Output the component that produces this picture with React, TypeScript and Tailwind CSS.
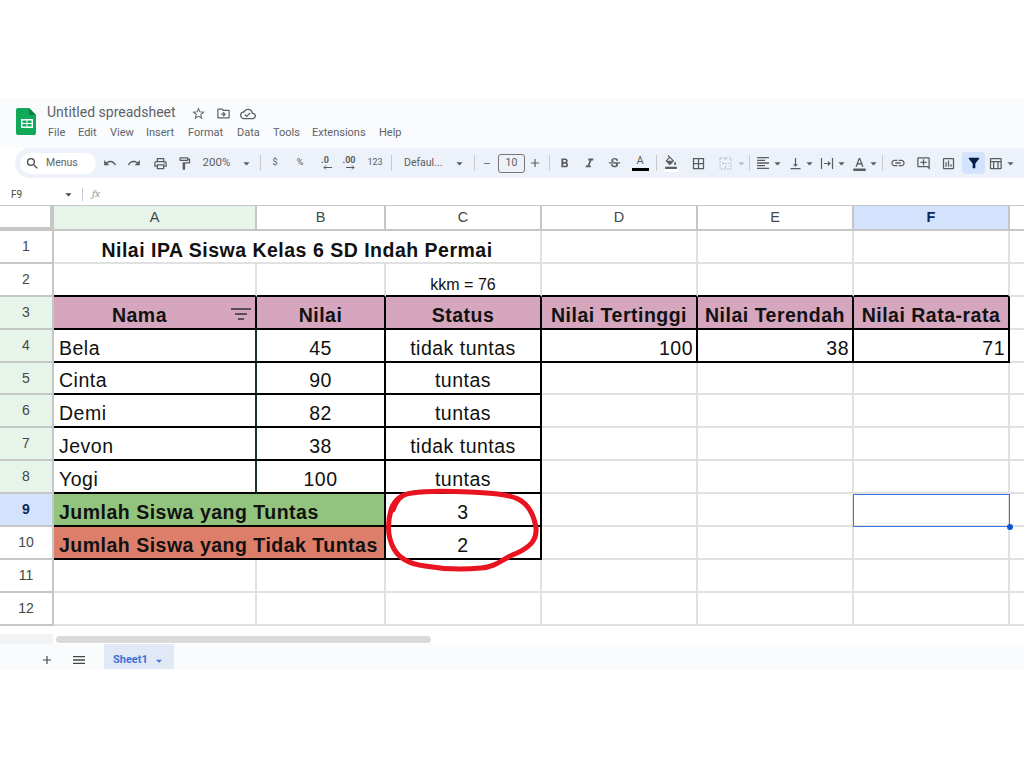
import type { ReactNode } from 'react';
import {
  MdAdd, MdArrowDropDown, MdBorderAll, MdFilterAlt, MdFormatAlignLeft, MdFormatBold, MdFormatColorFill,
  MdFormatColorText, MdFormatItalic, MdLink, MdMenu, MdOutlineAddComment, MdOutlineCloudDone,
  MdOutlineDriveFileMove, MdOutlineFormatPaint, MdOutlineInsertChart, MdOutlinePrint, MdOutlineStarBorder,
  MdOutlineTableChart, MdRedo, MdRemove, MdSearch, MdStrikethroughS, MdUndo, MdVerticalAlignBottom,
} from 'react-icons/md';

const menus = [
  ['File', 'w-[30px]'],
  ['Edit', 'w-[32px]'],
  ['View', 'w-[36px]'],
  ['Insert', 'w-[42px]'],
  ['Format', 'w-[49px]'],
  ['Data', 'w-[36px]'],
  ['Tools', 'w-[39px]'],
  ['Extensions', 'w-[67px]'],
  ['Help', 'w-[30px]'],
];

function T({ c, children }: { c: string; children?: ReactNode }) {
  return <div className={`flex h-full shrink-0 items-center justify-center ${c}`}>{children}</div>;
}

function Sep({ c }: { c: string }) {
  return (
    <T c={c}>
      <div className="h-[16px] w-px bg-[#c7c9cc]" />
    </T>
  );
}

function Caret({ c }: { c: string }) {
  return (
    <T c={c}>
      <MdArrowDropDown size={15} className="shrink-0" />
    </T>
  );
}

function Header() {
  return (
    <div className="flex h-[50px] bg-[#f9fbfd] pl-[16px] pt-[10px]">
      <svg width="20" height="27" viewBox="0 0 20 27" className="shrink-0">
        <path d="M2 0h11l7 7v18a2 2 0 0 1-2 2H2a2 2 0 0 1-2-2V2a2 2 0 0 1 2-2z" fill="#0fa958" />
        <path d="M13 0l7 7h-7z" fill="#0b8043" />
        <path d="M5 11h12v9H5z" fill="#fff" />
        <path d="M6.500 12.500h4v2.500h-4zM11.500 12.500h4v2.500h-4zM6.500 16h4v2.500h-4zM11.500 16h4v2.500h-4z" fill="#0fa958" />
      </svg>
      <div className="ml-[11px] -mt-[3px] flex flex-col">
        <div className="flex h-[14px] items-center text-[#5f6368]">
          <span className="w-[144px] text-[14px] leading-none">Untitled spreadsheet</span>
          <MdOutlineStarBorder size={15} className="mt-[3px]" />
          <MdOutlineDriveFileMove size={15} className="ml-[10px] mt-[3px]" />
          <MdOutlineCloudDone size={16} className="ml-[9px] mt-[3px]" />
        </div>
        <div className="mt-[6px] flex h-[16px] items-center pl-[1px] text-[11px] text-[#5f6368]">
          {menus.map(([label, w]) => (
            <span key={label} className={w}>
              {label}
            </span>
          ))}
        </div>
      </div>
    </div>
  );
}

function Toolbar() {
  return (
    <div className="ml-[15px] flex h-[30px] items-center rounded-l-[15px] bg-[#edf2fa] pl-[5px] text-[#5a5e61]">
      <div className="flex h-[21px] w-[76px] shrink-0 items-center rounded-full bg-white pl-[5px] text-[10.500px] text-[#5f6368]">
        <MdSearch size={15} className="text-[#444746]" />
        <span className="ml-[6px]">Menus</span>
      </div>
      <T c="w-[27px]"><MdUndo size={14} /></T>
      <T c="w-[22px]"><MdRedo size={14} /></T>
      <T c="w-[30px]"><MdOutlinePrint size={15} /></T>
      <T c="w-[18px]"><MdOutlineFormatPaint size={15} /></T>
      <T c="w-[47px] text-[11.500px]">200%</T>
      <Caret c="w-[13px]" />
      <Sep c="w-[14px]" />
      <T c="w-[16px] text-[9px]">$</T>
      <T c="w-[34px] text-[9px]">%</T>
      <T c="w-[16px] flex-col text-[9px] font-bold leading-[9px]">
        <span>.0</span>
        <svg width="10" height="5" viewBox="0 0 10 5" fill="none" stroke="currentColor" className="ml-[4px]">
          <path d="M10 2.500H2M4 .5l-2 2 2 2" />
        </svg>
      </T>
      <T c="w-[32px] flex-col text-[9px] font-bold leading-[9px]">
        <span>.00</span>
        <svg width="10" height="5" viewBox="0 0 10 5" fill="none" stroke="currentColor" className="ml-[4px]">
          <path d="M0 2.500h8M6 .5l2 2-2 2" />
        </svg>
      </T>
      <T c="w-[20px] text-[9px]">123</T>
      <Sep c="w-[12px]" />
      <T c="w-[55px] justify-start pl-[7px] text-[10.500px]">Defaul...</T>
      <Caret c="w-[14px]" />
      <Sep c="w-[16px]" />
      <T c="w-[10px]"><MdRemove size={13} /></T>
      <T c="w-[27px] ml-[6px]">
        <div className="flex h-[19px] w-[27px] items-center justify-center rounded-[3px] border border-[#747775] text-[10.500px]">10</div>
      </T>
      <T c="w-[20px]"><MdAdd size={14} /></T>
      <Sep c="w-[8px]" />
      <T c="w-[22px]"><MdFormatBold size={15} /></T>
      <T c="w-[28px]"><MdFormatItalic size={15} /></T>
      <T c="w-[22px]"><MdStrikethroughS size={15} /></T>
      <T c="w-[30px] flex-col">
        <span className="text-[11px] leading-[11px]">A</span>
        <div className="mt-[2px] h-[3px] w-[17px] bg-black" />
      </T>
      <Sep c="w-[2px]" />
      <T c="w-[28px] flex-col">
        <MdFormatColorFill size={14} />
        <div className="h-[3px] w-[14px] bg-white" />
      </T>
      <T c="w-[26px]"><MdBorderAll size={15} /></T>
      <T c="w-[28px]">
        <svg width="13" height="13" viewBox="0 0 13 13" fill="none" stroke="#b9bdc2">
          <path d="M1 1h11v11H1zM6.500 1v3M6.500 9v3M3 6.500h7" strokeDasharray="2 1" />
        </svg>
      </T>
      <T c="w-[4px] text-[#b9bdc2]"><MdArrowDropDown size={15} className="shrink-0" /></T>
      <Sep c="w-[12px]" />
      <T c="w-[16px]"><MdFormatAlignLeft size={16} /></T>
      <Caret c="w-[12px]" />
      <T c="w-[24px]"><MdVerticalAlignBottom size={15} /></T>
      <Caret c="w-[4px]" />
      <T c="w-[24px] ml-[4px]">
        <svg width="14" height="13" viewBox="0 0 14 13" fill="none" stroke="currentColor" strokeWidth="1.200">
          <path d="M1.500 1v11M12.500 1v11M4 6.500h6M8 4.500l2 2-2 2" />
        </svg>
      </T>
      <Caret c="w-[4px]" />
      <T c="w-[24px] ml-[4px]"><MdFormatColorText size={15} /></T>
      <Caret c="w-[4px]" />
      <Sep c="w-[14px]" />
      <T c="w-[18px]"><MdLink size={16} /></T>
      <T c="w-[32px]"><MdOutlineAddComment size={15} /></T>
      <T c="w-[18px]"><MdOutlineInsertChart size={15} /></T>
      <T c="w-[23px] ml-[5px]">
        <div className="flex h-[22px] w-[23px] items-center justify-center rounded-[4px] bg-[#d3e3fd] text-[#041e49]">
          <MdFilterAlt size={16} />
        </div>
      </T>
      <T c="w-[20px]"><MdOutlineTableChart size={15} /></T>
      <Caret c="w-[10px]" />
    </div>
  );
}

function FormulaBar() {
  return (
    <div className="mt-[5px] flex h-[23px] items-center border-b border-[#c7c7c7] pl-[11px] text-[10px] text-[#444746]">
      <span className="w-[50px]">F9</span>
      <MdArrowDropDown size={15} />
      <div className="ml-[6px] h-[13px] w-px bg-[#c7c9cc]" />
      <span className="ml-[9px] font-serif text-[11px] italic text-[#9aa0a6]">fx</span>
    </div>
  );
}

const gray = 'border-[#e1e1e1]';
const big = 'text-[19.500px] tracking-[0.5px] leading-[24px] pb-[1px]';
const body = 'flex items-end overflow-hidden border-r-2 border-b-2 whitespace-nowrap text-[#111]';
const pink = 'justify-center bg-[#d5a6bd] border-black font-bold';
const nameCell = 'pl-[5px] border-b-black border-r-[#17352a]';
const boxed = 'justify-center border-black';
const topLine = 'border-b-black border-r-[#e1e1e1]';

type CellDef = { text?: string; c: string; size?: string };

// rows 1-12, each without the row number cell
const rows: { n: number; head: string; cells: CellDef[] }[] = [
  {
    n: 1,
    head: 'bg-white text-[#444746]',
    cells: [
      { text: 'Nilai IPA Siswa Kelas 6 SD Indah Permai', c: `col-span-3 justify-center font-bold ${gray}`, size: 'text-[19.500px] tracking-[0.5px] leading-[24px] pb-0' },
      { c: gray },
      { c: gray },
      { c: gray },
    ],
  },
  {
    n: 2,
    head: 'bg-white text-[#444746]',
    cells: [
      { c: topLine },
      { c: topLine },
      { text: 'kkm = 76', c: `justify-center ${topLine}`, size: 'text-[16px] leading-[20px]' },
      { c: topLine },
      { c: topLine },
      { c: topLine },
    ],
  },
  {
    n: 3,
    head: 'bg-[#e6f4ea] text-[#444746]',
    cells: [
      { text: 'Nama', c: `relative pr-[30px] ${pink}` },
      { text: 'Nilai', c: pink },
      { text: 'Status', c: pink },
      { text: 'Nilai Tertinggi', c: pink },
      { text: 'Nilai Terendah', c: pink },
      { text: 'Nilai Rata-rata', c: pink },
    ],
  },
  {
    n: 4,
    head: 'bg-[#e6f4ea] text-[#444746]',
    cells: [
      { text: 'Bela', c: nameCell },
      { text: '45', c: boxed },
      { text: 'tidak tuntas', c: boxed },
      { text: '100', c: 'justify-end pr-[3px] border-black' },
      { text: '38', c: 'justify-end pr-[3px] border-black' },
      { text: '71', c: 'justify-end pr-[3px] border-black' },
    ],
  },
  {
    n: 5,
    head: 'bg-[#e6f4ea] text-[#444746]',
    cells: [
      { text: 'Cinta', c: nameCell },
      { text: '90', c: boxed },
      { text: 'tuntas', c: boxed },
      { c: gray },
      { c: gray },
      { c: gray },
    ],
  },
  {
    n: 6,
    head: 'bg-[#e6f4ea] text-[#444746]',
    cells: [
      { text: 'Demi', c: nameCell },
      { text: '82', c: boxed },
      { text: 'tuntas', c: boxed },
      { c: gray },
      { c: gray },
      { c: gray },
    ],
  },
  {
    n: 7,
    head: 'bg-[#e6f4ea] text-[#444746]',
    cells: [
      { text: 'Jevon', c: nameCell },
      { text: '38', c: boxed },
      { text: 'tidak tuntas', c: boxed },
      { c: gray },
      { c: gray },
      { c: gray },
    ],
  },
  {
    n: 8,
    head: 'bg-[#e6f4ea] text-[#444746]',
    cells: [
      { text: 'Yogi', c: nameCell },
      { text: '100', c: boxed },
      { text: 'tuntas', c: boxed },
      { c: gray },
      { c: gray },
      { c: gray },
    ],
  },
  {
    n: 9,
    head: 'bg-[#d3e3fd] font-bold text-[#0b2a5b]',
    cells: [
      { text: 'Jumlah Siswa yang Tuntas', c: 'col-span-2 pl-[5px] bg-[#93c47d] border-black font-bold' },
      { text: '3', c: boxed },
      { c: gray },
      { c: gray },
      { c: `relative overflow-visible ${gray}` },
    ],
  },
  {
    n: 10,
    head: 'bg-white text-[#444746]',
    cells: [
      { text: 'Jumlah Siswa yang Tidak Tuntas', c: 'col-span-2 pl-[5px] bg-[#dd7e6b] border-black font-bold' },
      { text: '2', c: boxed },
      { c: gray },
      { c: gray },
      { c: gray },
    ],
  },
  { n: 11, head: 'bg-white text-[#444746]', cells: [{ c: gray }, { c: gray }, { c: gray }, { c: gray }, { c: gray }, { c: gray }] },
  { n: 12, head: 'bg-white text-[#444746]', cells: [{ c: gray }, { c: gray }, { c: gray }, { c: gray }, { c: gray }, { c: gray }] },
];

const colHeads = [
  { label: 'A', c: 'bg-[#e6f4ea] text-[#444746]' },
  { label: 'B', c: 'bg-white text-[#444746]' },
  { label: 'C', c: 'bg-white text-[#444746]' },
  { label: 'D', c: 'bg-white text-[#444746]' },
  { label: 'E', c: 'bg-white text-[#444746]' },
  { label: 'F', c: 'bg-[#d3e3fd] font-bold text-[#0b2a5b]' },
];

function Sheet() {
  return (
    <div className="grid h-[428px] grid-cols-[54px_203px_129px_156px_156px_156px_156px_14px] grid-rows-[25px] auto-rows-[32.900px] overflow-hidden">
      <div className="border-r-[4px] border-b-[4px] border-[#c4c7c5] bg-white" />
      {colHeads.map((h) => (
        <div key={h.label} className={`flex items-center justify-center border-r-2 border-b-2 border-[#c4c7c5] text-[14.500px] ${h.c}`}>
          {h.label}
        </div>
      ))}
      <div className="border-b-2 border-[#c4c7c5]" />
      {rows.map((r) => (
        <div key={r.n} className="contents">
          <div className={`flex items-center justify-center border-r-2 border-b-2 border-[#c4c7c5] text-[14px] ${r.head}`}>{r.n}</div>
          {r.cells.map((cell, i) => (
            <div key={i} className={`${body} ${cell.size ?? big} ${cell.c}`}>
              {cell.text}
              {r.n === 3 && i === 0 && (
                <svg width="20" height="12" viewBox="0 0 20 12" className="absolute right-[4px] top-[11px]" fill="none" stroke="#333" strokeWidth="1.300">
                  <path d="M0 1h20M4 6h12M7 11h6" />
                </svg>
              )}
              {r.n === 9 && i === 4 && (
                <div className="absolute top-0 -left-px -right-[2px] -bottom-[2px] border border-[#3b78e7]">
                  <div className="absolute -bottom-[4px] -right-[4px] h-[6px] w-[6px] rounded-full bg-[#0b57d0]" />
                </div>
              )}
            </div>
          ))}
          <div className={`border-b-2 ${gray}`} />
        </div>
      ))}
    </div>
  );
}

function TabBar() {
  return (
    <>
      <div className="flex h-[10px] items-center bg-white">
        <div className="h-full w-[53px] bg-[#f1f3f4]" />
        <div className="ml-[3px] h-[7px] w-[375px] rounded-full bg-[#dadada]" />
      </div>
      <div className="flex h-[26px] bg-[#f9fbfd] text-[#444746]">
        <T c="w-[40px] ml-[27px] pt-[5px]"><MdAdd size={14} /></T>
        <T c="w-[24px] pt-[5px]"><MdMenu size={16} /></T>
        <div className="ml-[13px] flex h-[25px] w-[70px] items-center bg-[#e1e9f7] pl-[9px] pt-[8px] text-[11px] font-bold text-[#3b73d9]">
          Sheet1
          <MdArrowDropDown size={14} className="ml-[4px]" />
        </div>
      </div>
    </>
  );
}

export default function App() {
  return (
    <div className="relative flex h-[768px] w-[1024px] flex-col overflow-hidden bg-white pt-[98px] font-['Roboto',sans-serif]">
      <Header />
      <Toolbar />
      <FormulaBar />
      <div className="font-['Liberation_Sans',Arial,sans-serif]">
        <Sheet />
      </div>
      <TabBar />
      <svg width="1024" height="768" viewBox="0 0 1024 768" className="pointer-events-none absolute left-0 top-0" fill="none">
        <path
          d="M393 510C397 499 402 494 412 493C430 490 450 491 470 492C490 493 508 494 518 499C528 504 534 515 536 528C537 540 530 547 517 553C503 558 497 567 481 568C462 570 442 569 425 566C409 564 399 558 394 549C388 538 387 524 391 510C393 503 397 499 402 496"
          stroke="#e8141f"
          strokeWidth="5"
          strokeLinecap="round"
        />
      </svg>
    </div>
  );
}
